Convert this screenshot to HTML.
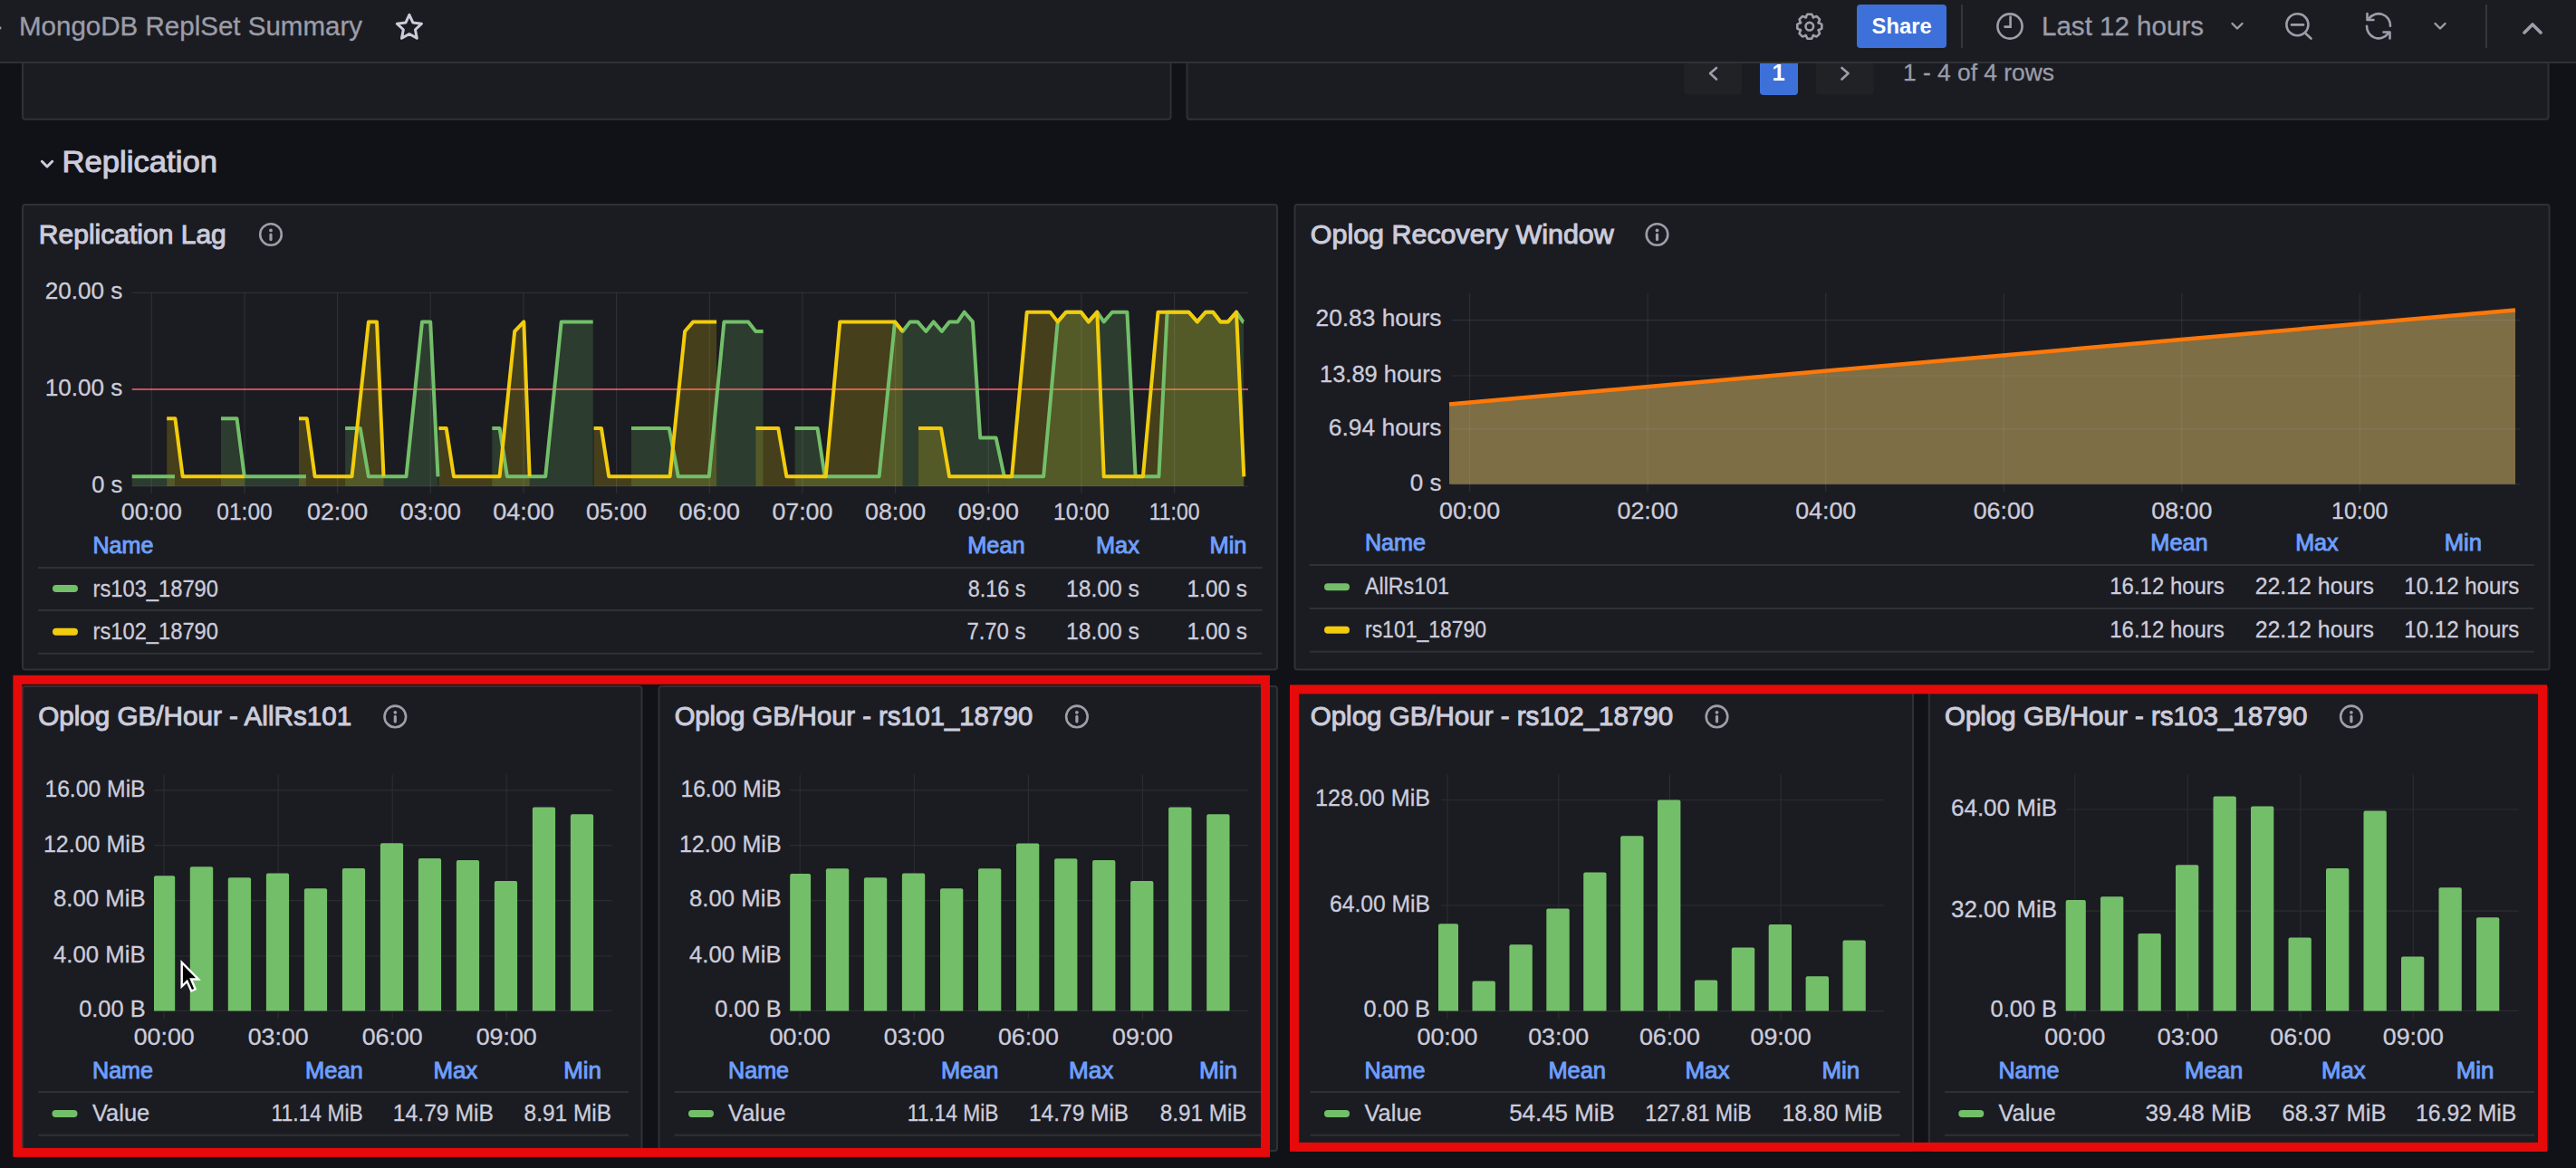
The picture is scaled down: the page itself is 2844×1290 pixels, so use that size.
<!DOCTYPE html>
<html><head><meta charset="utf-8"><title>MongoDB ReplSet Summary</title>
<style>html,body{margin:0;padding:0;background:#111217;overflow:hidden;width:2844px;height:1290px}svg{display:block;font-family:"Liberation Sans",sans-serif}</style>
</head><body>
<svg width="2844" height="1290" viewBox="0 0 2844 1290" font-family="Liberation Sans"><rect x="0.0" y="0.0" width="2844.0" height="1290.0" fill="#111217"/>
<rect x="25.0" y="31.0" width="1267.5" height="100.8" fill="#1b1c21" rx="3" stroke="#2f3136" stroke-width="2"/>
<rect x="1310.5" y="31.0" width="1503.0" height="100.8" fill="#1b1c21" rx="3" stroke="#2f3136" stroke-width="2"/>
<rect x="1859.2" y="56.0" width="63.8" height="48.6" fill="#202226" rx="4"/>
<rect x="1943.0" y="56.0" width="42.0" height="48.9" fill="#3d71d9" rx="4"/>
<rect x="2005.0" y="56.0" width="63.6" height="48.6" fill="#202226" rx="4"/>
<polyline points="1895,75 1888,81 1895,87.5" fill="none" stroke="#9d9eaa" stroke-width="2.6" stroke-linecap="round" stroke-linejoin="round"/>
<polyline points="2033.5,75 2040.5,81 2033.5,87.5" fill="none" stroke="#9d9eaa" stroke-width="2.6" stroke-linecap="round" stroke-linejoin="round"/>
<text x="1963.5" y="89.3" font-size="25.5" fill="#ffffff" text-anchor="middle" font-weight="700">1</text>
<text x="2101.0" y="88.8" font-size="26.4" fill="#9c9da9" textLength="167.0" lengthAdjust="spacingAndGlyphs" stroke="#9c9da9" stroke-width="0.3">1 - 4 of 4 rows</text>
<rect x="0.0" y="0.0" width="2844.0" height="68.0" fill="#1b1c21"/>
<rect x="0.0" y="68.0" width="2844.0" height="2.0" fill="#2f3136"/>
<rect x="0.0" y="29.5" width="1.3" height="2.8" fill="#9d9ea8"/>
<text x="21.0" y="39.2" font-size="29.5" fill="#9c9da9" textLength="379.0" lengthAdjust="spacingAndGlyphs" stroke="#9c9da9" stroke-width="0.3">MongoDB ReplSet Summary</text>
<polygon points="451.90,16.30 455.96,25.02 465.50,26.18 458.46,32.73 460.31,42.17 451.90,37.50 443.49,42.17 445.34,32.73 438.30,26.18 447.84,25.02" fill="none" stroke="#ccccdc" stroke-width="3" stroke-linejoin="round"/>
<polygon points="1993.49,19.52 1995.42,15.71 2000.18,15.71 2002.11,19.52 2001.60,19.30 2005.66,17.98 2009.02,21.34 2007.70,25.40 2007.48,24.89 2011.29,26.82 2011.29,31.58 2007.48,33.51 2007.70,33.00 2009.02,37.06 2005.66,40.42 2001.60,39.10 2002.11,38.88 2000.18,42.69 1995.42,42.69 1993.49,38.88 1994.00,39.10 1989.94,40.42 1986.58,37.06 1987.90,33.00 1988.12,33.51 1984.31,31.58 1984.31,26.82 1988.12,24.89 1987.90,25.40 1986.58,21.34 1989.94,17.98 1994.00,19.30" fill="none" stroke="#9d9eaa" stroke-width="2.6" stroke-linejoin="round"/>
<circle cx="1997.8" cy="29.2" r="4.3" fill="none" stroke="#9d9eaa" stroke-width="2.6"/>
<rect x="2050.0" y="5.0" width="99.0" height="48.0" fill="#3d71d9" rx="4"/>
<text x="2066.6" y="37.3" font-size="24.5" fill="#ffffff" font-weight="700" textLength="66.0" lengthAdjust="spacingAndGlyphs">Share</text>
<rect x="2165.0" y="5.0" width="2.0" height="48.0" fill="#34363c"/>
<circle cx="2219" cy="29" r="13.6" fill="none" stroke="#9d9eaa" stroke-width="2.6"/>
<polyline points="2219.6,18.5 2219.6,29.6 2213.5,29.6" fill="none" stroke="#9d9eaa" stroke-width="2.6" stroke-linecap="round"/>
<text x="2254.0" y="39.3" font-size="29.5" fill="#9c9da9" textLength="179.0" lengthAdjust="spacingAndGlyphs" stroke="#9c9da9" stroke-width="0.3">Last 12 hours</text>
<polyline points="2464.5,26 2470,31.5 2475.5,26" fill="none" stroke="#9d9eaa" stroke-width="2.4" stroke-linecap="round" stroke-linejoin="round"/>
<circle cx="2536.4" cy="27.2" r="12" fill="none" stroke="#9d9eaa" stroke-width="2.6"/>
<line x1="2530" y1="27.4" x2="2543" y2="27.4" stroke="#9d9eaa" stroke-width="2.6" stroke-linecap="round"/>
<line x1="2545.5" y1="37" x2="2551.5" y2="42.5" stroke="#9d9eaa" stroke-width="2.6" stroke-linecap="round"/>
<path d="M2613,28.7 A13,13 0 0 0 2636.5,37 M2639,28.7 A13,13 0 0 0 2615.5,20.5" fill="none" stroke="#9d9eaa" stroke-width="2.6" stroke-linecap="round"/>
<polyline points="2613.5,15 2613.5,22 2620.5,22" fill="none" stroke="#9d9eaa" stroke-width="2.6" stroke-linecap="round" stroke-linejoin="round"/>
<polyline points="2638.5,42.5 2638.5,35.5 2631.5,35.5" fill="none" stroke="#9d9eaa" stroke-width="2.6" stroke-linecap="round" stroke-linejoin="round"/>
<polyline points="2688.5,26 2694,31.5 2699.5,26" fill="none" stroke="#9d9eaa" stroke-width="2.4" stroke-linecap="round" stroke-linejoin="round"/>
<rect x="2744.0" y="5.0" width="2.0" height="48.0" fill="#34363c"/>
<polyline points="2787,36 2796,27 2805,36" fill="none" stroke="#9d9eaa" stroke-width="3.6" stroke-linecap="round" stroke-linejoin="round"/>
<polyline points="46.3,178.3 52,184 57.7,178.3" fill="none" stroke="#ccccdc" stroke-width="3" stroke-linecap="round" stroke-linejoin="round"/>
<text x="68.5" y="190.2" font-size="33.8" fill="#ccccdc" textLength="171.5" lengthAdjust="spacingAndGlyphs" stroke="#ccccdc" stroke-width="1.0">Replication</text>
<rect x="25.0" y="226.0" width="1385.0" height="513.5" fill="#1b1c21" rx="3" stroke="#2f3136" stroke-width="2"/>
<text x="42.8" y="268.7" font-size="30" fill="#ccccdc" textLength="207.0" lengthAdjust="spacingAndGlyphs" stroke="#ccccdc" stroke-width="1.0">Replication Lag</text>
<circle cx="299.0" cy="259.0" r="11.8" fill="none" stroke="#9d9eaa" stroke-width="2.6"/>
<circle cx="299.0" cy="254.4" r="1.9" fill="#9d9eaa"/>
<line x1="299.0" y1="259.0" x2="299.0" y2="264.6" stroke="#9d9eaa" stroke-width="3.2" stroke-linecap="round"/>
<text x="167.3" y="574.0" font-size="25" fill="#ccccdc" text-anchor="middle" textLength="67.0" lengthAdjust="spacingAndGlyphs" stroke="#ccccdc" stroke-width="0.3">00:00</text>
<text x="270.0" y="574.0" font-size="25" fill="#ccccdc" text-anchor="middle" textLength="61.4" lengthAdjust="spacingAndGlyphs" stroke="#ccccdc" stroke-width="0.3">01:00</text>
<text x="372.6" y="574.0" font-size="25" fill="#ccccdc" text-anchor="middle" textLength="67.0" lengthAdjust="spacingAndGlyphs" stroke="#ccccdc" stroke-width="0.3">02:00</text>
<text x="475.3" y="574.0" font-size="25" fill="#ccccdc" text-anchor="middle" textLength="67.0" lengthAdjust="spacingAndGlyphs" stroke="#ccccdc" stroke-width="0.3">03:00</text>
<text x="578.0" y="574.0" font-size="25" fill="#ccccdc" text-anchor="middle" textLength="67.7" lengthAdjust="spacingAndGlyphs" stroke="#ccccdc" stroke-width="0.3">04:00</text>
<text x="680.6" y="574.0" font-size="25" fill="#ccccdc" text-anchor="middle" textLength="67.0" lengthAdjust="spacingAndGlyphs" stroke="#ccccdc" stroke-width="0.3">05:00</text>
<text x="783.3" y="574.0" font-size="25" fill="#ccccdc" text-anchor="middle" textLength="67.0" lengthAdjust="spacingAndGlyphs" stroke="#ccccdc" stroke-width="0.3">06:00</text>
<text x="885.9" y="574.0" font-size="25" fill="#ccccdc" text-anchor="middle" textLength="67.0" lengthAdjust="spacingAndGlyphs" stroke="#ccccdc" stroke-width="0.3">07:00</text>
<text x="988.6" y="574.0" font-size="25" fill="#ccccdc" text-anchor="middle" textLength="67.0" lengthAdjust="spacingAndGlyphs" stroke="#ccccdc" stroke-width="0.3">08:00</text>
<text x="1091.3" y="574.0" font-size="25" fill="#ccccdc" text-anchor="middle" textLength="67.0" lengthAdjust="spacingAndGlyphs" stroke="#ccccdc" stroke-width="0.3">09:00</text>
<text x="1193.9" y="574.0" font-size="25" fill="#ccccdc" text-anchor="middle" textLength="61.7" lengthAdjust="spacingAndGlyphs" stroke="#ccccdc" stroke-width="0.3">10:00</text>
<text x="1296.6" y="574.0" font-size="25" fill="#ccccdc" text-anchor="middle" textLength="55.7" lengthAdjust="spacingAndGlyphs" stroke="#ccccdc" stroke-width="0.3">11:00</text>
<text x="135.3" y="330.0" font-size="25" fill="#ccccdc" text-anchor="end" textLength="85.6" lengthAdjust="spacingAndGlyphs" stroke="#ccccdc" stroke-width="0.3">20.00 s</text>
<text x="135.3" y="436.7" font-size="25" fill="#ccccdc" text-anchor="end" textLength="85.6" lengthAdjust="spacingAndGlyphs" stroke="#ccccdc" stroke-width="0.3">10.00 s</text>
<text x="135.3" y="543.7" font-size="25" fill="#ccccdc" text-anchor="end" textLength="34.0" lengthAdjust="spacingAndGlyphs" stroke="#ccccdc" stroke-width="0.3">0 s</text>
<line x1="145.7" y1="430.1" x2="1378.0" y2="430.1" stroke="#c84c5e" stroke-width="2"/>
<polygon points="145.7,537 145.7,526.3 193.0,526.3 193.0,537" fill="#73bf69" fill-opacity="0.2"/>
<polygon points="244.0,537 244.0,462.2 261.5,462.2 269.8,526.3 337.9,526.3 337.9,537" fill="#73bf69" fill-opacity="0.2"/>
<polygon points="381.1,537 381.1,472.9 397.7,472.9 406.9,526.3 448.5,526.3 466.0,355.4 475.2,355.4 483.5,526.3 483.5,537" fill="#73bf69" fill-opacity="0.2"/>
<polygon points="543.3,537 543.3,472.9 551.6,472.9 559.9,526.3 602.2,526.3 619.7,355.4 654.7,355.4 654.7,537" fill="#73bf69" fill-opacity="0.2"/>
<polygon points="697.0,537 697.0,472.9 738.7,472.9 748.8,526.3 782.8,526.3 799.4,355.4 826.1,355.4 834.4,366.0 842.6,366.0 842.6,537" fill="#73bf69" fill-opacity="0.2"/>
<polygon points="877.6,537 877.6,472.9 902.5,472.9 910.7,526.3 970.6,526.3 988.0,355.4 996.6,366.0 1004.8,355.4 1013.1,355.4 1022.3,366.0 1030.6,355.4 1039.8,366.0 1048.1,355.4 1057.3,355.4 1064.7,344.7 1073.9,355.4 1082.2,483.6 1099.6,483.6 1108.8,526.3 1108.8,537" fill="#73bf69" fill-opacity="0.2"/>
<polygon points="1108.8,537 1108.8,526.3 1152.1,526.3 1167.7,355.4 1176.9,344.7 1193.5,344.7 1201.8,355.4 1211.3,344.7 1218.7,355.4 1227.9,344.7 1244.4,344.7 1253.6,526.3 1253.6,537" fill="#73bf69" fill-opacity="0.2"/>
<polygon points="1253.6,537 1253.6,526.3 1279.4,526.3 1288.6,344.7 1312.5,344.7 1321.8,355.4 1331.0,344.7 1339.2,344.7 1347.5,355.4 1355.8,355.4 1365.0,344.7 1372.4,355.4 1373.0,355.4 1373.0,537" fill="#73bf69" fill-opacity="0.2"/>
<polygon points="184.2,537 184.2,462.2 193.4,462.2 201.7,526.3 269.8,526.3 269.8,537" fill="#f2cc0c" fill-opacity="0.2"/>
<polygon points="330.0,537 330.0,462.2 338.8,462.2 347.6,526.3 388.5,526.3 406.9,355.4 416.0,355.4 423.5,526.3 423.5,537" fill="#f2cc0c" fill-opacity="0.2"/>
<polygon points="484.4,537 484.4,472.9 492.7,472.9 501.0,526.3 551.6,526.3 568.2,366.0 578.3,355.4 584.7,526.3 584.7,537" fill="#f2cc0c" fill-opacity="0.2"/>
<polygon points="655.6,537 655.6,472.9 663.9,472.9 672.2,526.3 739.6,526.3 756.1,366.0 765.3,355.4 791.1,355.4 791.1,537" fill="#f2cc0c" fill-opacity="0.2"/>
<polygon points="834.4,537 834.4,472.9 859.2,472.9 868.4,526.3 911.7,526.3 927.3,355.4 988.0,355.4 996.6,366.0 996.6,537" fill="#f2cc0c" fill-opacity="0.2"/>
<polygon points="1014.0,537 1014.0,472.9 1038.9,472.9 1048.1,526.3 1117.1,526.3 1133.7,344.7 1159.5,344.7 1167.7,355.4 1176.9,344.7 1193.5,344.7 1201.8,355.4 1211.3,344.7 1218.7,526.3 1261.9,526.3 1278.5,344.7 1312.5,344.7 1321.8,355.4 1331.0,344.7 1339.2,344.7 1347.5,355.4 1355.8,355.4 1365.0,344.7 1373.3,526.3 1373.3,537" fill="#f2cc0c" fill-opacity="0.2"/>
<line x1="145.7" y1="537.0" x2="1378.0" y2="537.0" stroke="rgba(204,204,220,0.11)" stroke-width="1.2"/>
<line x1="145.7" y1="323.3" x2="1378.0" y2="323.3" stroke="rgba(204,204,220,0.11)" stroke-width="1.2"/>
<line x1="167.3" y1="323.3" x2="167.3" y2="545.0" stroke="rgba(204,204,220,0.11)" stroke-width="1.2"/>
<line x1="270.0" y1="323.3" x2="270.0" y2="545.0" stroke="rgba(204,204,220,0.11)" stroke-width="1.2"/>
<line x1="372.6" y1="323.3" x2="372.6" y2="545.0" stroke="rgba(204,204,220,0.11)" stroke-width="1.2"/>
<line x1="475.3" y1="323.3" x2="475.3" y2="545.0" stroke="rgba(204,204,220,0.11)" stroke-width="1.2"/>
<line x1="578.0" y1="323.3" x2="578.0" y2="545.0" stroke="rgba(204,204,220,0.11)" stroke-width="1.2"/>
<line x1="680.6" y1="323.3" x2="680.6" y2="545.0" stroke="rgba(204,204,220,0.11)" stroke-width="1.2"/>
<line x1="783.3" y1="323.3" x2="783.3" y2="545.0" stroke="rgba(204,204,220,0.11)" stroke-width="1.2"/>
<line x1="885.9" y1="323.3" x2="885.9" y2="545.0" stroke="rgba(204,204,220,0.11)" stroke-width="1.2"/>
<line x1="988.6" y1="323.3" x2="988.6" y2="545.0" stroke="rgba(204,204,220,0.11)" stroke-width="1.2"/>
<line x1="1091.3" y1="323.3" x2="1091.3" y2="545.0" stroke="rgba(204,204,220,0.11)" stroke-width="1.2"/>
<line x1="1193.9" y1="323.3" x2="1193.9" y2="545.0" stroke="rgba(204,204,220,0.11)" stroke-width="1.2"/>
<line x1="1296.6" y1="323.3" x2="1296.6" y2="545.0" stroke="rgba(204,204,220,0.11)" stroke-width="1.2"/>
<polyline points="145.7,526.3 193.0,526.3" fill="none" stroke="#73bf69" stroke-width="4" stroke-linejoin="round"/>
<polyline points="244.0,462.2 261.5,462.2 269.8,526.3 337.9,526.3" fill="none" stroke="#73bf69" stroke-width="4" stroke-linejoin="round"/>
<polyline points="381.1,472.9 397.7,472.9 406.9,526.3 448.5,526.3 466.0,355.4 475.2,355.4 483.5,526.3" fill="none" stroke="#73bf69" stroke-width="4" stroke-linejoin="round"/>
<polyline points="543.3,472.9 551.6,472.9 559.9,526.3 602.2,526.3 619.7,355.4 654.7,355.4" fill="none" stroke="#73bf69" stroke-width="4" stroke-linejoin="round"/>
<polyline points="697.0,472.9 738.7,472.9 748.8,526.3 782.8,526.3 799.4,355.4 826.1,355.4 834.4,366.0 842.6,366.0" fill="none" stroke="#73bf69" stroke-width="4" stroke-linejoin="round"/>
<polyline points="877.6,472.9 902.5,472.9 910.7,526.3 970.6,526.3 988.0,355.4 996.6,366.0 1004.8,355.4 1013.1,355.4 1022.3,366.0 1030.6,355.4 1039.8,366.0 1048.1,355.4 1057.3,355.4 1064.7,344.7 1073.9,355.4 1082.2,483.6 1099.6,483.6 1108.8,526.3" fill="none" stroke="#73bf69" stroke-width="4" stroke-linejoin="round"/>
<polyline points="1108.8,526.3 1152.1,526.3 1167.7,355.4 1176.9,344.7 1193.5,344.7 1201.8,355.4 1211.3,344.7 1218.7,355.4 1227.9,344.7 1244.4,344.7 1253.6,526.3" fill="none" stroke="#73bf69" stroke-width="4" stroke-linejoin="round"/>
<polyline points="1253.6,526.3 1279.4,526.3 1288.6,344.7 1312.5,344.7 1321.8,355.4 1331.0,344.7 1339.2,344.7 1347.5,355.4 1355.8,355.4 1365.0,344.7 1372.4,355.4 1373.0,355.4" fill="none" stroke="#73bf69" stroke-width="4" stroke-linejoin="round"/>
<polyline points="184.2,462.2 193.4,462.2 201.7,526.3 269.8,526.3" fill="none" stroke="#f2cc0c" stroke-width="4" stroke-linejoin="round"/>
<polyline points="330.0,462.2 338.8,462.2 347.6,526.3 388.5,526.3 406.9,355.4 416.0,355.4 423.5,526.3" fill="none" stroke="#f2cc0c" stroke-width="4" stroke-linejoin="round"/>
<polyline points="484.4,472.9 492.7,472.9 501.0,526.3 551.6,526.3 568.2,366.0 578.3,355.4 584.7,526.3" fill="none" stroke="#f2cc0c" stroke-width="4" stroke-linejoin="round"/>
<polyline points="655.6,472.9 663.9,472.9 672.2,526.3 739.6,526.3 756.1,366.0 765.3,355.4 791.1,355.4" fill="none" stroke="#f2cc0c" stroke-width="4" stroke-linejoin="round"/>
<polyline points="834.4,472.9 859.2,472.9 868.4,526.3 911.7,526.3 927.3,355.4 988.0,355.4 996.6,366.0" fill="none" stroke="#f2cc0c" stroke-width="4" stroke-linejoin="round"/>
<polyline points="1014.0,472.9 1038.9,472.9 1048.1,526.3 1117.1,526.3 1133.7,344.7 1159.5,344.7 1167.7,355.4 1176.9,344.7 1193.5,344.7 1201.8,355.4 1211.3,344.7 1218.7,526.3 1261.9,526.3 1278.5,344.7 1312.5,344.7 1321.8,355.4 1331.0,344.7 1339.2,344.7 1347.5,355.4 1355.8,355.4 1365.0,344.7 1373.3,526.3" fill="none" stroke="#f2cc0c" stroke-width="4" stroke-linejoin="round"/>
<text x="102.4" y="610.7" font-size="25" fill="#6e9fff" textLength="67.0" lengthAdjust="spacingAndGlyphs" stroke="#6e9fff" stroke-width="0.9">Name</text>
<text x="1131.6" y="610.7" font-size="25" fill="#6e9fff" text-anchor="end" textLength="63.3" lengthAdjust="spacingAndGlyphs" stroke="#6e9fff" stroke-width="0.9">Mean</text>
<text x="1257.8" y="610.7" font-size="25" fill="#6e9fff" text-anchor="end" textLength="47.8" lengthAdjust="spacingAndGlyphs" stroke="#6e9fff" stroke-width="0.9">Max</text>
<text x="1376.5" y="610.7" font-size="25" fill="#6e9fff" text-anchor="end" textLength="41.1" lengthAdjust="spacingAndGlyphs" stroke="#6e9fff" stroke-width="0.9">Min</text>
<line x1="42.0" y1="627.0" x2="1393.7" y2="627.0" stroke="#2f3136" stroke-width="2"/>
<line x1="42.0" y1="674.0" x2="1393.7" y2="674.0" stroke="#2f3136" stroke-width="2"/>
<line x1="42.0" y1="721.8" x2="1393.7" y2="721.8" stroke="#2f3136" stroke-width="2"/>
<rect x="58.0" y="646.1" width="28.0" height="8.0" fill="#73bf69" rx="4"/>
<rect x="58.0" y="693.7" width="28.0" height="8.0" fill="#f2cc0c" rx="4"/>
<text x="102.5" y="658.5" font-size="25" fill="#ccccdc" textLength="138.5" lengthAdjust="spacingAndGlyphs" stroke="#ccccdc" stroke-width="0.3">rs103_18790</text>
<text x="102.5" y="705.7" font-size="25" fill="#ccccdc" textLength="138.5" lengthAdjust="spacingAndGlyphs" stroke="#ccccdc" stroke-width="0.3">rs102_18790</text>
<text x="1132.5" y="658.5" font-size="25" fill="#ccccdc" text-anchor="end" textLength="63.7" lengthAdjust="spacingAndGlyphs" stroke="#ccccdc" stroke-width="0.3">8.16 s</text>
<text x="1257.8" y="658.5" font-size="25" fill="#ccccdc" text-anchor="end" textLength="80.8" lengthAdjust="spacingAndGlyphs" stroke="#ccccdc" stroke-width="0.3">18.00 s</text>
<text x="1377.0" y="658.5" font-size="25" fill="#ccccdc" text-anchor="end" textLength="66.4" lengthAdjust="spacingAndGlyphs" stroke="#ccccdc" stroke-width="0.3">1.00 s</text>
<text x="1132.5" y="705.7" font-size="25" fill="#ccccdc" text-anchor="end" textLength="65.1" lengthAdjust="spacingAndGlyphs" stroke="#ccccdc" stroke-width="0.3">7.70 s</text>
<text x="1257.8" y="705.7" font-size="25" fill="#ccccdc" text-anchor="end" textLength="80.8" lengthAdjust="spacingAndGlyphs" stroke="#ccccdc" stroke-width="0.3">18.00 s</text>
<text x="1377.0" y="705.7" font-size="25" fill="#ccccdc" text-anchor="end" textLength="66.4" lengthAdjust="spacingAndGlyphs" stroke="#ccccdc" stroke-width="0.3">1.00 s</text>
<rect x="1429.5" y="226.0" width="1385.1" height="513.5" fill="#1b1c21" rx="3" stroke="#2f3136" stroke-width="2"/>
<text x="1446.8" y="268.5" font-size="30" fill="#ccccdc" textLength="335.0" lengthAdjust="spacingAndGlyphs" stroke="#ccccdc" stroke-width="1.0">Oplog Recovery Window</text>
<circle cx="1829.5" cy="259.0" r="11.8" fill="none" stroke="#9d9eaa" stroke-width="2.6"/>
<circle cx="1829.5" cy="254.4" r="1.9" fill="#9d9eaa"/>
<line x1="1829.5" y1="259.0" x2="1829.5" y2="264.6" stroke="#9d9eaa" stroke-width="3.2" stroke-linecap="round"/>
<polygon points="1600,446.5 2777,342.4 2777,534.8 1600,534.8" fill="#7d6e45"/>
<line x1="1602.6" y1="353.6" x2="2782.0" y2="353.6" stroke="rgba(204,204,220,0.11)" stroke-width="1.2"/>
<text x="1591.5" y="360.4" font-size="25" fill="#ccccdc" text-anchor="end" textLength="139.0" lengthAdjust="spacingAndGlyphs" stroke="#ccccdc" stroke-width="0.3">20.83 hours</text>
<line x1="1602.6" y1="415.0" x2="2782.0" y2="415.0" stroke="rgba(204,204,220,0.11)" stroke-width="1.2"/>
<text x="1591.5" y="421.8" font-size="25" fill="#ccccdc" text-anchor="end" textLength="134.5" lengthAdjust="spacingAndGlyphs" stroke="#ccccdc" stroke-width="0.3">13.89 hours</text>
<line x1="1602.6" y1="473.8" x2="2782.0" y2="473.8" stroke="rgba(204,204,220,0.11)" stroke-width="1.2"/>
<text x="1591.5" y="480.6" font-size="25" fill="#ccccdc" text-anchor="end" textLength="124.7" lengthAdjust="spacingAndGlyphs" stroke="#ccccdc" stroke-width="0.3">6.94 hours</text>
<line x1="1602.6" y1="534.8" x2="2782.0" y2="534.8" stroke="rgba(204,204,220,0.11)" stroke-width="1.2"/>
<text x="1591.5" y="541.6" font-size="25" fill="#ccccdc" text-anchor="end" textLength="34.7" lengthAdjust="spacingAndGlyphs" stroke="#ccccdc" stroke-width="0.3">0 s</text>
<line x1="1622.6" y1="323.7" x2="1622.6" y2="543.0" stroke="rgba(204,204,220,0.11)" stroke-width="1.2"/>
<text x="1622.6" y="572.7" font-size="25" fill="#ccccdc" text-anchor="middle" textLength="67.0" lengthAdjust="spacingAndGlyphs" stroke="#ccccdc" stroke-width="0.3">00:00</text>
<line x1="1819.1" y1="323.7" x2="1819.1" y2="543.0" stroke="rgba(204,204,220,0.11)" stroke-width="1.2"/>
<text x="1819.1" y="572.7" font-size="25" fill="#ccccdc" text-anchor="middle" textLength="67.0" lengthAdjust="spacingAndGlyphs" stroke="#ccccdc" stroke-width="0.3">02:00</text>
<line x1="2015.7" y1="323.7" x2="2015.7" y2="543.0" stroke="rgba(204,204,220,0.11)" stroke-width="1.2"/>
<text x="2015.7" y="572.7" font-size="25" fill="#ccccdc" text-anchor="middle" textLength="67.0" lengthAdjust="spacingAndGlyphs" stroke="#ccccdc" stroke-width="0.3">04:00</text>
<line x1="2212.2" y1="323.7" x2="2212.2" y2="543.0" stroke="rgba(204,204,220,0.11)" stroke-width="1.2"/>
<text x="2212.2" y="572.7" font-size="25" fill="#ccccdc" text-anchor="middle" textLength="67.0" lengthAdjust="spacingAndGlyphs" stroke="#ccccdc" stroke-width="0.3">06:00</text>
<line x1="2408.8" y1="323.7" x2="2408.8" y2="543.0" stroke="rgba(204,204,220,0.11)" stroke-width="1.2"/>
<text x="2408.8" y="572.7" font-size="25" fill="#ccccdc" text-anchor="middle" textLength="67.0" lengthAdjust="spacingAndGlyphs" stroke="#ccccdc" stroke-width="0.3">08:00</text>
<line x1="2605.3" y1="323.7" x2="2605.3" y2="543.0" stroke="rgba(204,204,220,0.11)" stroke-width="1.2"/>
<text x="2605.3" y="572.7" font-size="25" fill="#ccccdc" text-anchor="middle" textLength="62.4" lengthAdjust="spacingAndGlyphs" stroke="#ccccdc" stroke-width="0.3">10:00</text>
<line x1="1600" y1="446.5" x2="2777" y2="342.4" stroke="#ff780a" stroke-width="4.5"/>
<text x="1506.9" y="608.0" font-size="25" fill="#6e9fff" textLength="67.0" lengthAdjust="spacingAndGlyphs" stroke="#6e9fff" stroke-width="0.9">Name</text>
<text x="2437.7" y="608.0" font-size="25" fill="#6e9fff" text-anchor="end" textLength="63.4" lengthAdjust="spacingAndGlyphs" stroke="#6e9fff" stroke-width="0.9">Mean</text>
<text x="2581.6" y="608.0" font-size="25" fill="#6e9fff" text-anchor="end" textLength="47.4" lengthAdjust="spacingAndGlyphs" stroke="#6e9fff" stroke-width="0.9">Max</text>
<text x="2740.0" y="608.0" font-size="25" fill="#6e9fff" text-anchor="end" textLength="41.3" lengthAdjust="spacingAndGlyphs" stroke="#6e9fff" stroke-width="0.9">Min</text>
<line x1="1445.9" y1="624.1" x2="2797.6" y2="624.1" stroke="#2f3136" stroke-width="2"/>
<line x1="1445.9" y1="672.0" x2="2797.6" y2="672.0" stroke="#2f3136" stroke-width="2"/>
<line x1="1445.9" y1="719.8" x2="2797.6" y2="719.8" stroke="#2f3136" stroke-width="2"/>
<rect x="1462.0" y="644.2" width="28.0" height="8.0" fill="#73bf69" rx="4"/>
<rect x="1462.0" y="691.8" width="28.0" height="8.0" fill="#f2cc0c" rx="4"/>
<text x="1507.0" y="656.4" font-size="25" fill="#ccccdc" textLength="93.0" lengthAdjust="spacingAndGlyphs" stroke="#ccccdc" stroke-width="0.3">AllRs101</text>
<text x="1507.0" y="703.6" font-size="25" fill="#ccccdc" textLength="134.0" lengthAdjust="spacingAndGlyphs" stroke="#ccccdc" stroke-width="0.3">rs101_18790</text>
<text x="2455.8" y="656.4" font-size="25" fill="#ccccdc" text-anchor="end" textLength="126.5" lengthAdjust="spacingAndGlyphs" stroke="#ccccdc" stroke-width="0.3">16.12 hours</text>
<text x="2621.0" y="656.4" font-size="25" fill="#ccccdc" text-anchor="end" textLength="131.3" lengthAdjust="spacingAndGlyphs" stroke="#ccccdc" stroke-width="0.3">22.12 hours</text>
<text x="2781.4" y="656.4" font-size="25" fill="#ccccdc" text-anchor="end" textLength="127.1" lengthAdjust="spacingAndGlyphs" stroke="#ccccdc" stroke-width="0.3">10.12 hours</text>
<text x="2455.8" y="703.6" font-size="25" fill="#ccccdc" text-anchor="end" textLength="126.5" lengthAdjust="spacingAndGlyphs" stroke="#ccccdc" stroke-width="0.3">16.12 hours</text>
<text x="2621.0" y="703.6" font-size="25" fill="#ccccdc" text-anchor="end" textLength="131.3" lengthAdjust="spacingAndGlyphs" stroke="#ccccdc" stroke-width="0.3">22.12 hours</text>
<text x="2781.4" y="703.6" font-size="25" fill="#ccccdc" text-anchor="end" textLength="127.1" lengthAdjust="spacingAndGlyphs" stroke="#ccccdc" stroke-width="0.3">10.12 hours</text>
<rect x="25.0" y="758.0" width="683.5" height="513.0" fill="#1b1c21" rx="3" stroke="#2f3136" stroke-width="2"/>
<text x="42.2" y="800.7" font-size="30" fill="#ccccdc" textLength="346.0" lengthAdjust="spacingAndGlyphs" stroke="#ccccdc" stroke-width="1.0">Oplog GB/Hour - AllRs101</text>
<circle cx="436.3" cy="791.4" r="11.8" fill="none" stroke="#9d9eaa" stroke-width="2.6"/>
<circle cx="436.3" cy="786.8" r="1.9" fill="#9d9eaa"/>
<line x1="436.3" y1="791.4" x2="436.3" y2="797.0" stroke="#9d9eaa" stroke-width="3.2" stroke-linecap="round"/>
<line x1="170.0" y1="872.9" x2="676.0" y2="872.9" stroke="#2a2c31" stroke-width="1.2"/>
<text x="160.6" y="879.7" font-size="25" fill="#ccccdc" text-anchor="end" textLength="111.2" lengthAdjust="spacingAndGlyphs" stroke="#ccccdc" stroke-width="0.3">16.00 MiB</text>
<line x1="170.0" y1="933.7" x2="676.0" y2="933.7" stroke="#2a2c31" stroke-width="1.2"/>
<text x="160.6" y="940.5" font-size="25" fill="#ccccdc" text-anchor="end" textLength="112.7" lengthAdjust="spacingAndGlyphs" stroke="#ccccdc" stroke-width="0.3">12.00 MiB</text>
<line x1="170.0" y1="994.6" x2="676.0" y2="994.6" stroke="#2a2c31" stroke-width="1.2"/>
<text x="160.6" y="1001.4" font-size="25" fill="#ccccdc" text-anchor="end" textLength="101.6" lengthAdjust="spacingAndGlyphs" stroke="#ccccdc" stroke-width="0.3">8.00 MiB</text>
<line x1="170.0" y1="1056.0" x2="676.0" y2="1056.0" stroke="#2a2c31" stroke-width="1.2"/>
<text x="160.6" y="1062.8" font-size="25" fill="#ccccdc" text-anchor="end" textLength="101.6" lengthAdjust="spacingAndGlyphs" stroke="#ccccdc" stroke-width="0.3">4.00 MiB</text>
<line x1="170.0" y1="1116.4" x2="676.0" y2="1116.4" stroke="#2a2c31" stroke-width="1.2"/>
<text x="160.6" y="1123.2" font-size="25" fill="#ccccdc" text-anchor="end" textLength="73.4" lengthAdjust="spacingAndGlyphs" stroke="#ccccdc" stroke-width="0.3">0.00 B</text>
<line x1="181.2" y1="855.6" x2="181.2" y2="1125.5" stroke="#2a2c31" stroke-width="1.2"/>
<text x="181.2" y="1154.3" font-size="25" fill="#ccccdc" text-anchor="middle" textLength="67.0" lengthAdjust="spacingAndGlyphs" stroke="#ccccdc" stroke-width="0.3">00:00</text>
<line x1="307.2" y1="855.6" x2="307.2" y2="1125.5" stroke="#2a2c31" stroke-width="1.2"/>
<text x="307.2" y="1154.3" font-size="25" fill="#ccccdc" text-anchor="middle" textLength="67.0" lengthAdjust="spacingAndGlyphs" stroke="#ccccdc" stroke-width="0.3">03:00</text>
<line x1="433.2" y1="855.6" x2="433.2" y2="1125.5" stroke="#2a2c31" stroke-width="1.2"/>
<text x="433.2" y="1154.3" font-size="25" fill="#ccccdc" text-anchor="middle" textLength="67.0" lengthAdjust="spacingAndGlyphs" stroke="#ccccdc" stroke-width="0.3">06:00</text>
<line x1="559.2" y1="855.6" x2="559.2" y2="1125.5" stroke="#2a2c31" stroke-width="1.2"/>
<text x="559.2" y="1154.3" font-size="25" fill="#ccccdc" text-anchor="middle" textLength="67.0" lengthAdjust="spacingAndGlyphs" stroke="#ccccdc" stroke-width="0.3">09:00</text>
<path d="M170.0,1116.4 V969.3 Q170.0,967.3 172.0,967.3 H191.2 Q193.2,967.3 193.2,969.3 V1116.4 Z" fill="#73bf69"/>
<path d="M209.8,1116.4 V959.2 Q209.8,957.2 211.8,957.2 H233.2 Q235.2,957.2 235.2,959.2 V1116.4 Z" fill="#73bf69"/>
<path d="M251.8,1116.4 V971.2 Q251.8,969.2 253.8,969.2 H275.1 Q277.1,969.2 277.1,971.2 V1116.4 Z" fill="#73bf69"/>
<path d="M293.9,1116.4 V966.4 Q293.9,964.4 295.9,964.4 H317.1 Q319.1,964.4 319.1,966.4 V1116.4 Z" fill="#73bf69"/>
<path d="M335.9,1116.4 V983.2 Q335.9,981.2 337.9,981.2 H359.1 Q361.1,981.2 361.1,983.2 V1116.4 Z" fill="#73bf69"/>
<path d="M377.9,1116.4 V961.1 Q377.9,959.1 379.9,959.1 H401.1 Q403.1,959.1 403.1,961.1 V1116.4 Z" fill="#73bf69"/>
<path d="M419.9,1116.4 V933.3 Q419.9,931.3 421.9,931.3 H443.1 Q445.1,931.3 445.1,933.3 V1116.4 Z" fill="#73bf69"/>
<path d="M461.9,1116.4 V950.1 Q461.9,948.1 463.9,948.1 H485.1 Q487.1,948.1 487.1,950.1 V1116.4 Z" fill="#73bf69"/>
<path d="M503.9,1116.4 V952.0 Q503.9,950.0 505.9,950.0 H527.1 Q529.1,950.0 529.1,952.0 V1116.4 Z" fill="#73bf69"/>
<path d="M545.9,1116.4 V975.0 Q545.9,973.0 547.9,973.0 H569.1 Q571.1,973.0 571.1,975.0 V1116.4 Z" fill="#73bf69"/>
<path d="M587.9,1116.4 V893.5 Q587.9,891.5 589.9,891.5 H611.1 Q613.1,891.5 613.1,893.5 V1116.4 Z" fill="#73bf69"/>
<path d="M629.9,1116.4 V901.2 Q629.9,899.2 631.9,899.2 H653.1 Q655.1,899.2 655.1,901.2 V1116.4 Z" fill="#73bf69"/>
<text x="102.0" y="1191.0" font-size="25" fill="#6e9fff" textLength="67.0" lengthAdjust="spacingAndGlyphs" stroke="#6e9fff" stroke-width="0.9">Name</text>
<text x="400.8" y="1191.0" font-size="25" fill="#6e9fff" text-anchor="end" textLength="63.8" lengthAdjust="spacingAndGlyphs" stroke="#6e9fff" stroke-width="0.9">Mean</text>
<text x="527.3" y="1191.0" font-size="25" fill="#6e9fff" text-anchor="end" textLength="48.9" lengthAdjust="spacingAndGlyphs" stroke="#6e9fff" stroke-width="0.9">Max</text>
<text x="664.0" y="1191.0" font-size="25" fill="#6e9fff" text-anchor="end" textLength="41.8" lengthAdjust="spacingAndGlyphs" stroke="#6e9fff" stroke-width="0.9">Min</text>
<line x1="42.2" y1="1206.0" x2="694.0" y2="1206.0" stroke="#2f3136" stroke-width="2"/>
<line x1="42.2" y1="1253.8" x2="694.0" y2="1253.8" stroke="#2f3136" stroke-width="2"/>
<rect x="57.5" y="1226.0" width="28.0" height="8.0" fill="#73bf69" rx="4"/>
<text x="102.0" y="1238.0" font-size="25" fill="#ccccdc" textLength="63.2" lengthAdjust="spacingAndGlyphs" stroke="#ccccdc" stroke-width="0.3">Value</text>
<text x="400.8" y="1238.0" font-size="25" fill="#ccccdc" text-anchor="end" textLength="101.2" lengthAdjust="spacingAndGlyphs" stroke="#ccccdc" stroke-width="0.3">11.14 MiB</text>
<text x="545.0" y="1238.0" font-size="25" fill="#ccccdc" text-anchor="end" textLength="111.2" lengthAdjust="spacingAndGlyphs" stroke="#ccccdc" stroke-width="0.3">14.79 MiB</text>
<text x="675.0" y="1238.0" font-size="25" fill="#ccccdc" text-anchor="end" textLength="96.4" lengthAdjust="spacingAndGlyphs" stroke="#ccccdc" stroke-width="0.3">8.91 MiB</text>
<rect x="727.5" y="758.0" width="682.5" height="513.0" fill="#1b1c21" rx="3" stroke="#2f3136" stroke-width="2"/>
<text x="744.7" y="800.7" font-size="30" fill="#ccccdc" textLength="395.6" lengthAdjust="spacingAndGlyphs" stroke="#ccccdc" stroke-width="1.0">Oplog GB/Hour - rs101_18790</text>
<circle cx="1188.9" cy="791.4" r="11.8" fill="none" stroke="#9d9eaa" stroke-width="2.6"/>
<circle cx="1188.9" cy="786.8" r="1.9" fill="#9d9eaa"/>
<line x1="1188.9" y1="791.4" x2="1188.9" y2="797.0" stroke="#9d9eaa" stroke-width="3.2" stroke-linecap="round"/>
<line x1="872.0" y1="872.9" x2="1378.0" y2="872.9" stroke="#2a2c31" stroke-width="1.2"/>
<text x="862.6" y="879.7" font-size="25" fill="#ccccdc" text-anchor="end" textLength="111.2" lengthAdjust="spacingAndGlyphs" stroke="#ccccdc" stroke-width="0.3">16.00 MiB</text>
<line x1="872.0" y1="933.7" x2="1378.0" y2="933.7" stroke="#2a2c31" stroke-width="1.2"/>
<text x="862.6" y="940.5" font-size="25" fill="#ccccdc" text-anchor="end" textLength="112.7" lengthAdjust="spacingAndGlyphs" stroke="#ccccdc" stroke-width="0.3">12.00 MiB</text>
<line x1="872.0" y1="994.6" x2="1378.0" y2="994.6" stroke="#2a2c31" stroke-width="1.2"/>
<text x="862.6" y="1001.4" font-size="25" fill="#ccccdc" text-anchor="end" textLength="101.6" lengthAdjust="spacingAndGlyphs" stroke="#ccccdc" stroke-width="0.3">8.00 MiB</text>
<line x1="872.0" y1="1056.0" x2="1378.0" y2="1056.0" stroke="#2a2c31" stroke-width="1.2"/>
<text x="862.6" y="1062.8" font-size="25" fill="#ccccdc" text-anchor="end" textLength="101.6" lengthAdjust="spacingAndGlyphs" stroke="#ccccdc" stroke-width="0.3">4.00 MiB</text>
<line x1="872.0" y1="1116.4" x2="1378.0" y2="1116.4" stroke="#2a2c31" stroke-width="1.2"/>
<text x="862.6" y="1123.2" font-size="25" fill="#ccccdc" text-anchor="end" textLength="73.4" lengthAdjust="spacingAndGlyphs" stroke="#ccccdc" stroke-width="0.3">0.00 B</text>
<line x1="883.2" y1="855.6" x2="883.2" y2="1125.5" stroke="#2a2c31" stroke-width="1.2"/>
<text x="883.2" y="1154.3" font-size="25" fill="#ccccdc" text-anchor="middle" textLength="67.0" lengthAdjust="spacingAndGlyphs" stroke="#ccccdc" stroke-width="0.3">00:00</text>
<line x1="1009.3" y1="855.6" x2="1009.3" y2="1125.5" stroke="#2a2c31" stroke-width="1.2"/>
<text x="1009.3" y="1154.3" font-size="25" fill="#ccccdc" text-anchor="middle" textLength="67.0" lengthAdjust="spacingAndGlyphs" stroke="#ccccdc" stroke-width="0.3">03:00</text>
<line x1="1135.4" y1="855.6" x2="1135.4" y2="1125.5" stroke="#2a2c31" stroke-width="1.2"/>
<text x="1135.4" y="1154.3" font-size="25" fill="#ccccdc" text-anchor="middle" textLength="67.0" lengthAdjust="spacingAndGlyphs" stroke="#ccccdc" stroke-width="0.3">06:00</text>
<line x1="1261.5" y1="855.6" x2="1261.5" y2="1125.5" stroke="#2a2c31" stroke-width="1.2"/>
<text x="1261.5" y="1154.3" font-size="25" fill="#ccccdc" text-anchor="middle" textLength="67.0" lengthAdjust="spacingAndGlyphs" stroke="#ccccdc" stroke-width="0.3">09:00</text>
<path d="M872.2,1116.4 V967.0 Q872.2,965.0 874.2,965.0 H893.1 Q895.1,965.0 895.1,967.0 V1116.4 Z" fill="#73bf69"/>
<path d="M911.9,1116.4 V961.2 Q911.9,959.2 913.9,959.2 H935.2 Q937.2,959.2 937.2,961.2 V1116.4 Z" fill="#73bf69"/>
<path d="M953.9,1116.4 V971.3 Q953.9,969.3 955.9,969.3 H977.2 Q979.2,969.3 979.2,971.3 V1116.4 Z" fill="#73bf69"/>
<path d="M995.9,1116.4 V966.5 Q995.9,964.5 997.9,964.5 H1019.2 Q1021.2,964.5 1021.2,966.5 V1116.4 Z" fill="#73bf69"/>
<path d="M1038.0,1116.4 V983.3 Q1038.0,981.3 1040.0,981.3 H1061.3 Q1063.3,981.3 1063.3,983.3 V1116.4 Z" fill="#73bf69"/>
<path d="M1080.0,1116.4 V961.2 Q1080.0,959.2 1082.0,959.2 H1103.3 Q1105.3,959.2 1105.3,961.2 V1116.4 Z" fill="#73bf69"/>
<path d="M1122.0,1116.4 V933.4 Q1122.0,931.4 1124.0,931.4 H1145.3 Q1147.3,931.4 1147.3,933.4 V1116.4 Z" fill="#73bf69"/>
<path d="M1164.1,1116.4 V950.2 Q1164.1,948.2 1166.1,948.2 H1187.4 Q1189.4,948.2 1189.4,950.2 V1116.4 Z" fill="#73bf69"/>
<path d="M1206.1,1116.4 V952.1 Q1206.1,950.1 1208.1,950.1 H1229.4 Q1231.4,950.1 1231.4,952.1 V1116.4 Z" fill="#73bf69"/>
<path d="M1248.1,1116.4 V975.1 Q1248.1,973.1 1250.1,973.1 H1271.4 Q1273.4,973.1 1273.4,975.1 V1116.4 Z" fill="#73bf69"/>
<path d="M1290.1,1116.4 V893.6 Q1290.1,891.6 1292.1,891.6 H1313.5 Q1315.5,891.6 1315.5,893.6 V1116.4 Z" fill="#73bf69"/>
<path d="M1332.2,1116.4 V901.3 Q1332.2,899.3 1334.2,899.3 H1355.5 Q1357.5,899.3 1357.5,901.3 V1116.4 Z" fill="#73bf69"/>
<text x="804.1" y="1191.0" font-size="25" fill="#6e9fff" textLength="67.0" lengthAdjust="spacingAndGlyphs" stroke="#6e9fff" stroke-width="0.9">Name</text>
<text x="1102.4" y="1191.0" font-size="25" fill="#6e9fff" text-anchor="end" textLength="63.4" lengthAdjust="spacingAndGlyphs" stroke="#6e9fff" stroke-width="0.9">Mean</text>
<text x="1229.4" y="1191.0" font-size="25" fill="#6e9fff" text-anchor="end" textLength="49.4" lengthAdjust="spacingAndGlyphs" stroke="#6e9fff" stroke-width="0.9">Max</text>
<text x="1366.0" y="1191.0" font-size="25" fill="#6e9fff" text-anchor="end" textLength="42.0" lengthAdjust="spacingAndGlyphs" stroke="#6e9fff" stroke-width="0.9">Min</text>
<line x1="744.7" y1="1206.0" x2="1395.5" y2="1206.0" stroke="#2f3136" stroke-width="2"/>
<line x1="744.7" y1="1253.8" x2="1395.5" y2="1253.8" stroke="#2f3136" stroke-width="2"/>
<rect x="760.0" y="1226.0" width="28.0" height="8.0" fill="#73bf69" rx="4"/>
<text x="804.1" y="1238.0" font-size="25" fill="#ccccdc" textLength="63.2" lengthAdjust="spacingAndGlyphs" stroke="#ccccdc" stroke-width="0.3">Value</text>
<text x="1102.4" y="1238.0" font-size="25" fill="#ccccdc" text-anchor="end" textLength="100.7" lengthAdjust="spacingAndGlyphs" stroke="#ccccdc" stroke-width="0.3">11.14 MiB</text>
<text x="1246.2" y="1238.0" font-size="25" fill="#ccccdc" text-anchor="end" textLength="110.2" lengthAdjust="spacingAndGlyphs" stroke="#ccccdc" stroke-width="0.3">14.79 MiB</text>
<text x="1376.6" y="1238.0" font-size="25" fill="#ccccdc" text-anchor="end" textLength="95.9" lengthAdjust="spacingAndGlyphs" stroke="#ccccdc" stroke-width="0.3">8.91 MiB</text>
<rect x="1429.5" y="758.0" width="682.5" height="513.0" fill="#1b1c21" rx="3" stroke="#2f3136" stroke-width="2"/>
<text x="1446.7" y="800.7" font-size="30" fill="#ccccdc" textLength="400.5" lengthAdjust="spacingAndGlyphs" stroke="#ccccdc" stroke-width="1.0">Oplog GB/Hour - rs102_18790</text>
<circle cx="1895.5" cy="791.4" r="11.8" fill="none" stroke="#9d9eaa" stroke-width="2.6"/>
<circle cx="1895.5" cy="786.8" r="1.9" fill="#9d9eaa"/>
<line x1="1895.5" y1="791.4" x2="1895.5" y2="797.0" stroke="#9d9eaa" stroke-width="3.2" stroke-linecap="round"/>
<line x1="1590.9" y1="883.5" x2="2080.0" y2="883.5" stroke="#2a2c31" stroke-width="1.2"/>
<text x="1579.0" y="890.3" font-size="25" fill="#ccccdc" text-anchor="end" textLength="127.0" lengthAdjust="spacingAndGlyphs" stroke="#ccccdc" stroke-width="0.3">128.00 MiB</text>
<line x1="1590.9" y1="1000.0" x2="2080.0" y2="1000.0" stroke="#2a2c31" stroke-width="1.2"/>
<text x="1579.0" y="1006.8" font-size="25" fill="#ccccdc" text-anchor="end" textLength="111.0" lengthAdjust="spacingAndGlyphs" stroke="#ccccdc" stroke-width="0.3">64.00 MiB</text>
<line x1="1590.9" y1="1116.6" x2="2080.0" y2="1116.6" stroke="#2a2c31" stroke-width="1.2"/>
<text x="1579.0" y="1123.4" font-size="25" fill="#ccccdc" text-anchor="end" textLength="73.4" lengthAdjust="spacingAndGlyphs" stroke="#ccccdc" stroke-width="0.3">0.00 B</text>
<line x1="1598.0" y1="855.6" x2="1598.0" y2="1125.5" stroke="#2a2c31" stroke-width="1.2"/>
<text x="1598.0" y="1154.3" font-size="25" fill="#ccccdc" text-anchor="middle" textLength="67.0" lengthAdjust="spacingAndGlyphs" stroke="#ccccdc" stroke-width="0.3">00:00</text>
<line x1="1720.7" y1="855.6" x2="1720.7" y2="1125.5" stroke="#2a2c31" stroke-width="1.2"/>
<text x="1720.7" y="1154.3" font-size="25" fill="#ccccdc" text-anchor="middle" textLength="67.0" lengthAdjust="spacingAndGlyphs" stroke="#ccccdc" stroke-width="0.3">03:00</text>
<line x1="1843.4" y1="855.6" x2="1843.4" y2="1125.5" stroke="#2a2c31" stroke-width="1.2"/>
<text x="1843.4" y="1154.3" font-size="25" fill="#ccccdc" text-anchor="middle" textLength="67.0" lengthAdjust="spacingAndGlyphs" stroke="#ccccdc" stroke-width="0.3">06:00</text>
<line x1="1966.1" y1="855.6" x2="1966.1" y2="1125.5" stroke="#2a2c31" stroke-width="1.2"/>
<text x="1966.1" y="1154.3" font-size="25" fill="#ccccdc" text-anchor="middle" textLength="67.0" lengthAdjust="spacingAndGlyphs" stroke="#ccccdc" stroke-width="0.3">09:00</text>
<path d="M1588.0,1116.4 V1022.2 Q1588.0,1020.2 1590.0,1020.2 H1608.0 Q1610.0,1020.2 1610.0,1022.2 V1116.4 Z" fill="#73bf69"/>
<path d="M1625.5,1116.4 V1085.5 Q1625.5,1083.5 1627.5,1083.5 H1648.9 Q1650.9,1083.5 1650.9,1085.5 V1116.4 Z" fill="#73bf69"/>
<path d="M1666.4,1116.4 V1045.2 Q1666.4,1043.2 1668.4,1043.2 H1689.8 Q1691.8,1043.2 1691.8,1045.2 V1116.4 Z" fill="#73bf69"/>
<path d="M1707.3,1116.4 V1005.4 Q1707.3,1003.4 1709.3,1003.4 H1730.7 Q1732.7,1003.4 1732.7,1005.4 V1116.4 Z" fill="#73bf69"/>
<path d="M1748.2,1116.4 V965.6 Q1748.2,963.6 1750.2,963.6 H1771.5 Q1773.5,963.6 1773.5,965.6 V1116.4 Z" fill="#73bf69"/>
<path d="M1789.1,1116.4 V925.3 Q1789.1,923.3 1791.1,923.3 H1812.5 Q1814.5,923.3 1814.5,925.3 V1116.4 Z" fill="#73bf69"/>
<path d="M1830.0,1116.4 V885.5 Q1830.0,883.5 1832.0,883.5 H1853.4 Q1855.4,883.5 1855.4,885.5 V1116.4 Z" fill="#73bf69"/>
<path d="M1870.9,1116.4 V1084.5 Q1870.9,1082.5 1872.9,1082.5 H1894.2 Q1896.2,1082.5 1896.2,1084.5 V1116.4 Z" fill="#73bf69"/>
<path d="M1911.8,1116.4 V1048.5 Q1911.8,1046.5 1913.8,1046.5 H1935.2 Q1937.2,1046.5 1937.2,1048.5 V1116.4 Z" fill="#73bf69"/>
<path d="M1952.7,1116.4 V1023.1 Q1952.7,1021.1 1954.7,1021.1 H1976.0 Q1978.0,1021.1 1978.0,1023.1 V1116.4 Z" fill="#73bf69"/>
<path d="M1993.6,1116.4 V1080.2 Q1993.6,1078.2 1995.6,1078.2 H2017.0 Q2019.0,1078.2 2019.0,1080.2 V1116.4 Z" fill="#73bf69"/>
<path d="M2034.5,1116.4 V1040.4 Q2034.5,1038.4 2036.5,1038.4 H2057.8 Q2059.8,1038.4 2059.8,1040.4 V1116.4 Z" fill="#73bf69"/>
<text x="1506.5" y="1191.0" font-size="25" fill="#6e9fff" textLength="67.0" lengthAdjust="spacingAndGlyphs" stroke="#6e9fff" stroke-width="0.9">Name</text>
<text x="1773.0" y="1191.0" font-size="25" fill="#6e9fff" text-anchor="end" textLength="63.6" lengthAdjust="spacingAndGlyphs" stroke="#6e9fff" stroke-width="0.9">Mean</text>
<text x="1909.4" y="1191.0" font-size="25" fill="#6e9fff" text-anchor="end" textLength="49.0" lengthAdjust="spacingAndGlyphs" stroke="#6e9fff" stroke-width="0.9">Max</text>
<text x="2053.2" y="1191.0" font-size="25" fill="#6e9fff" text-anchor="end" textLength="41.7" lengthAdjust="spacingAndGlyphs" stroke="#6e9fff" stroke-width="0.9">Min</text>
<line x1="1446.7" y1="1206.0" x2="2097.5" y2="1206.0" stroke="#2f3136" stroke-width="2"/>
<line x1="1446.7" y1="1253.8" x2="2097.5" y2="1253.8" stroke="#2f3136" stroke-width="2"/>
<rect x="1462.0" y="1226.0" width="28.0" height="8.0" fill="#73bf69" rx="4"/>
<text x="1506.5" y="1238.0" font-size="25" fill="#ccccdc" textLength="63.2" lengthAdjust="spacingAndGlyphs" stroke="#ccccdc" stroke-width="0.3">Value</text>
<text x="1782.7" y="1238.0" font-size="25" fill="#ccccdc" text-anchor="end" textLength="116.5" lengthAdjust="spacingAndGlyphs" stroke="#ccccdc" stroke-width="0.3">54.45 MiB</text>
<text x="1933.8" y="1238.0" font-size="25" fill="#ccccdc" text-anchor="end" textLength="117.5" lengthAdjust="spacingAndGlyphs" stroke="#ccccdc" stroke-width="0.3">127.81 MiB</text>
<text x="2078.6" y="1238.0" font-size="25" fill="#ccccdc" text-anchor="end" textLength="111.2" lengthAdjust="spacingAndGlyphs" stroke="#ccccdc" stroke-width="0.3">18.80 MiB</text>
<rect x="2129.8" y="758.0" width="682.7" height="513.0" fill="#1b1c21" rx="3" stroke="#2f3136" stroke-width="2"/>
<text x="2147.0" y="800.7" font-size="30" fill="#ccccdc" textLength="400.3" lengthAdjust="spacingAndGlyphs" stroke="#ccccdc" stroke-width="1.0">Oplog GB/Hour - rs103_18790</text>
<circle cx="2595.9" cy="791.4" r="11.8" fill="none" stroke="#9d9eaa" stroke-width="2.6"/>
<circle cx="2595.9" cy="786.8" r="1.9" fill="#9d9eaa"/>
<line x1="2595.9" y1="791.4" x2="2595.9" y2="797.0" stroke="#9d9eaa" stroke-width="3.2" stroke-linecap="round"/>
<line x1="2282.0" y1="894.0" x2="2780.7" y2="894.0" stroke="#2a2c31" stroke-width="1.2"/>
<text x="2271.0" y="900.8" font-size="25" fill="#ccccdc" text-anchor="end" textLength="117.0" lengthAdjust="spacingAndGlyphs" stroke="#ccccdc" stroke-width="0.3">64.00 MiB</text>
<line x1="2282.0" y1="1006.1" x2="2780.7" y2="1006.1" stroke="#2a2c31" stroke-width="1.2"/>
<text x="2271.0" y="1012.9" font-size="25" fill="#ccccdc" text-anchor="end" textLength="117.0" lengthAdjust="spacingAndGlyphs" stroke="#ccccdc" stroke-width="0.3">32.00 MiB</text>
<line x1="2282.0" y1="1116.4" x2="2780.7" y2="1116.4" stroke="#2a2c31" stroke-width="1.2"/>
<text x="2271.0" y="1123.2" font-size="25" fill="#ccccdc" text-anchor="end" textLength="73.4" lengthAdjust="spacingAndGlyphs" stroke="#ccccdc" stroke-width="0.3">0.00 B</text>
<line x1="2290.8" y1="855.6" x2="2290.8" y2="1125.5" stroke="#2a2c31" stroke-width="1.2"/>
<text x="2290.8" y="1154.3" font-size="25" fill="#ccccdc" text-anchor="middle" textLength="67.0" lengthAdjust="spacingAndGlyphs" stroke="#ccccdc" stroke-width="0.3">00:00</text>
<line x1="2415.3" y1="855.6" x2="2415.3" y2="1125.5" stroke="#2a2c31" stroke-width="1.2"/>
<text x="2415.3" y="1154.3" font-size="25" fill="#ccccdc" text-anchor="middle" textLength="67.0" lengthAdjust="spacingAndGlyphs" stroke="#ccccdc" stroke-width="0.3">03:00</text>
<line x1="2539.8" y1="855.6" x2="2539.8" y2="1125.5" stroke="#2a2c31" stroke-width="1.2"/>
<text x="2539.8" y="1154.3" font-size="25" fill="#ccccdc" text-anchor="middle" textLength="67.0" lengthAdjust="spacingAndGlyphs" stroke="#ccccdc" stroke-width="0.3">06:00</text>
<line x1="2664.3" y1="855.6" x2="2664.3" y2="1125.5" stroke="#2a2c31" stroke-width="1.2"/>
<text x="2664.3" y="1154.3" font-size="25" fill="#ccccdc" text-anchor="middle" textLength="67.0" lengthAdjust="spacingAndGlyphs" stroke="#ccccdc" stroke-width="0.3">09:00</text>
<path d="M2280.7,1116.4 V996.1 Q2280.7,994.1 2282.7,994.1 H2300.8 Q2302.8,994.1 2302.8,996.1 V1116.4 Z" fill="#73bf69"/>
<path d="M2319.0,1116.4 V992.3 Q2319.0,990.3 2321.0,990.3 H2342.3 Q2344.3,990.3 2344.3,992.3 V1116.4 Z" fill="#73bf69"/>
<path d="M2360.5,1116.4 V1033.0 Q2360.5,1031.0 2362.5,1031.0 H2383.8 Q2385.8,1031.0 2385.8,1033.0 V1116.4 Z" fill="#73bf69"/>
<path d="M2402.0,1116.4 V957.3 Q2402.0,955.3 2404.0,955.3 H2425.3 Q2427.3,955.3 2427.3,957.3 V1116.4 Z" fill="#73bf69"/>
<path d="M2443.5,1116.4 V881.6 Q2443.5,879.6 2445.5,879.6 H2466.8 Q2468.8,879.6 2468.8,881.6 V1116.4 Z" fill="#73bf69"/>
<path d="M2485.0,1116.4 V892.6 Q2485.0,890.6 2487.0,890.6 H2508.3 Q2510.3,890.6 2510.3,892.6 V1116.4 Z" fill="#73bf69"/>
<path d="M2526.5,1116.4 V1037.4 Q2526.5,1035.4 2528.5,1035.4 H2549.8 Q2551.8,1035.4 2551.8,1037.4 V1116.4 Z" fill="#73bf69"/>
<path d="M2568.0,1116.4 V961.1 Q2568.0,959.1 2570.0,959.1 H2591.3 Q2593.3,959.1 2593.3,961.1 V1116.4 Z" fill="#73bf69"/>
<path d="M2609.5,1116.4 V897.4 Q2609.5,895.4 2611.5,895.4 H2632.8 Q2634.8,895.4 2634.8,897.4 V1116.4 Z" fill="#73bf69"/>
<path d="M2651.0,1116.4 V1058.5 Q2651.0,1056.5 2653.0,1056.5 H2674.3 Q2676.3,1056.5 2676.3,1058.5 V1116.4 Z" fill="#73bf69"/>
<path d="M2692.5,1116.4 V982.2 Q2692.5,980.2 2694.5,980.2 H2715.8 Q2717.8,980.2 2717.8,982.2 V1116.4 Z" fill="#73bf69"/>
<path d="M2734.0,1116.4 V1015.3 Q2734.0,1013.3 2736.0,1013.3 H2757.3 Q2759.3,1013.3 2759.3,1015.3 V1116.4 Z" fill="#73bf69"/>
<text x="2206.4" y="1191.0" font-size="25" fill="#6e9fff" textLength="67.0" lengthAdjust="spacingAndGlyphs" stroke="#6e9fff" stroke-width="0.9">Name</text>
<text x="2476.3" y="1191.0" font-size="25" fill="#6e9fff" text-anchor="end" textLength="64.3" lengthAdjust="spacingAndGlyphs" stroke="#6e9fff" stroke-width="0.9">Mean</text>
<text x="2611.5" y="1191.0" font-size="25" fill="#6e9fff" text-anchor="end" textLength="48.5" lengthAdjust="spacingAndGlyphs" stroke="#6e9fff" stroke-width="0.9">Max</text>
<text x="2753.4" y="1191.0" font-size="25" fill="#6e9fff" text-anchor="end" textLength="41.7" lengthAdjust="spacingAndGlyphs" stroke="#6e9fff" stroke-width="0.9">Min</text>
<line x1="2147.0" y1="1206.0" x2="2798.0" y2="1206.0" stroke="#2f3136" stroke-width="2"/>
<line x1="2147.0" y1="1253.8" x2="2798.0" y2="1253.8" stroke="#2f3136" stroke-width="2"/>
<rect x="2162.3" y="1226.0" width="28.0" height="8.0" fill="#73bf69" rx="4"/>
<text x="2206.4" y="1238.0" font-size="25" fill="#ccccdc" textLength="63.2" lengthAdjust="spacingAndGlyphs" stroke="#ccccdc" stroke-width="0.3">Value</text>
<text x="2486.0" y="1238.0" font-size="25" fill="#ccccdc" text-anchor="end" textLength="117.5" lengthAdjust="spacingAndGlyphs" stroke="#ccccdc" stroke-width="0.3">39.48 MiB</text>
<text x="2634.5" y="1238.0" font-size="25" fill="#ccccdc" text-anchor="end" textLength="115.0" lengthAdjust="spacingAndGlyphs" stroke="#ccccdc" stroke-width="0.3">68.37 MiB</text>
<text x="2778.3" y="1238.0" font-size="25" fill="#ccccdc" text-anchor="end" textLength="111.2" lengthAdjust="spacingAndGlyphs" stroke="#ccccdc" stroke-width="0.3">16.92 MiB</text>
<rect x="19.4" y="750.8" width="1377.6" height="522.1" fill="none" stroke="#e60a0a" stroke-width="10"/>
<rect x="1429.0" y="761.4" width="1378.0" height="505.4" fill="none" stroke="#e60a0a" stroke-width="10"/>
<path d="M200.7,1063 L200.7,1089.5 L206.5,1083.8 L211.3,1094.5 L215.7,1092.5 L211,1081.5 L219,1081.5 Z" fill="#000" stroke="#fff" stroke-width="2.4" stroke-linejoin="miter"/></svg>
</body></html>
